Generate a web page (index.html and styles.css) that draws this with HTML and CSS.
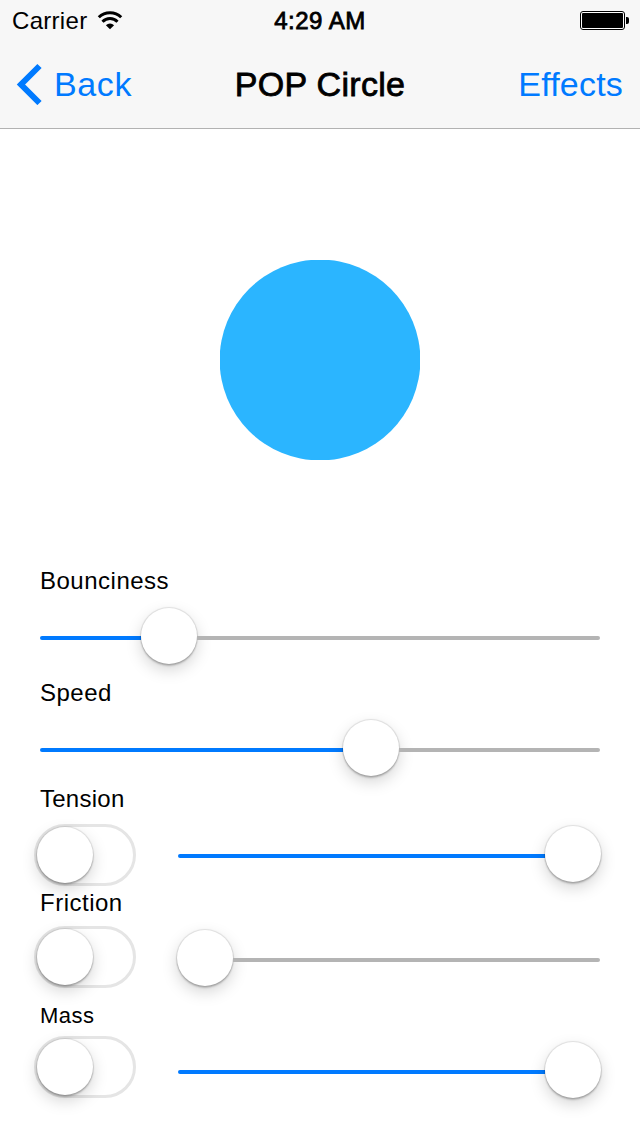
FILE: index.html
```html
<!DOCTYPE html>
<html lang="en">
<head>
<meta charset="utf-8">
<title>POP Circle</title>
<link rel="stylesheet" href="styles.css">
</head>
<body>
<header class="header">
  <div class="status">
    <div class="carrier"><span>Carrier</span>
      <svg class="wifi" width="26" height="20" viewBox="0 0 26 20">
        <g fill="none" stroke="#000" stroke-width="3">
          <path d="M1.8 7.2A16 16 0 0 1 24.2 7.2"/>
          <path d="M5.500 11.7A10.500 10.500 0 0 1 20.500 11.7"/>
        </g>
        <path d="M8.900 15.200A5.900 5.900 0 0 1 17.100 15.200L13 19.300Z"/>
      </svg>
    </div>
    <span class="clock medium">4:29 AM</span>
    <svg class="battery" width="50" height="20" viewBox="0 0 50 20">
      <rect x=".5" y=".5" width="44" height="18" rx="2.5" fill="#fff" stroke="#000"/>
      <rect x="2" y="2" width="41" height="15" rx="1"/>
      <path d="M46 6h1q2 0 2 2v3q0 2-2 2h-1z"/>
    </svg>
  </div>
  <nav class="nav">
    <a class="back">
      <svg class="chevron" width="26" height="42" viewBox="0 0 26 42"><path d="M23.500 3L5 21.500L23.500 40" fill="none" stroke="#007aff" stroke-width="6"/></svg>
      <span>Back</span>
    </a>
    <h1 class="title medium">POP Circle</h1>
    <a class="effects">Effects</a>
  </nav>
</header>
<main>
  <section class="stage">
    <svg class="circle" width="200" height="200" viewBox="0 0 200 200"><circle cx="100" cy="100" r="100.4" fill="#2bb5ff"/></svg>
  </section>
  <section class="fields">
    <div class="field bounciness">
      <label class="label">Bounciness</label>
      <div class="row"><div class="slider"><i class="fill" style="width:101px"></i><i class="knob"></i><i class="rest"></i></div></div>
    </div>
    <div class="field speed">
      <label class="label">Speed</label>
      <div class="row"><div class="slider"><i class="fill" style="width:303px"></i><i class="knob"></i><i class="rest"></i></div></div>
    </div>
    <div class="field tension">
      <label class="label">Tension</label>
      <div class="row"><div class="switch"><i class="knob"></i></div><div class="slider"><i class="fill" style="width:367px"></i><i class="knob"></i></div></div>
    </div>
    <div class="field friction">
      <label class="label">Friction</label>
      <div class="row"><div class="switch"><i class="knob"></i></div><div class="slider at-start"><i class="knob"></i><i class="rest"></i></div></div>
    </div>
    <div class="field mass">
      <label class="label">Mass</label>
      <div class="row"><div class="switch"><i class="knob"></i></div><div class="slider"><i class="fill" style="width:367px"></i><i class="knob"></i></div></div>
    </div>
  </section>
</main>
</body>
</html>
```
FILE: styles.css
```css
* { box-sizing: border-box; }
body {
  margin: 0;
  width: 640px;
  height: 1136px;
  overflow: hidden;
  background: #fff;
  color: #000;
  font-family: "Liberation Sans", Arial, sans-serif;
  font-size: 24px;
}
svg { display: block; flex: none; }
.header {
  height: 129px;
  background: #f7f7f7;
  border-bottom: 1px solid #b2b2b2;
}
.status {
  height: 40px;
  display: grid;
  grid-template-columns: 1fr auto 1fr;
  align-items: start;
  padding: 7px 12px 0 12px;
  line-height: 28px;
}
.carrier { display: flex; gap: 10px; letter-spacing: .3px; }
.wifi { margin-top: 3px; }
.clock { letter-spacing: .5px; }
.medium { -webkit-text-stroke: .8px #000; }
.battery { justify-self: end; margin: 4px -2px 0 0; }
.nav {
  height: 88px;
  display: grid;
  grid-template-columns: 1fr auto 1fr;
  align-items: center;
  padding: 0 16px;
  font-size: 34px;
  line-height: 40px;
}
.back, .effects { color: #007aff; }
.back { display: flex; align-items: center; gap: 12px; letter-spacing: .6px; }
.title {
  margin: 0;
  font-size: 34px;
  font-weight: 400;
  letter-spacing: .3px;
}
.effects { justify-self: end; margin-right: 1px; letter-spacing: .2px; }
.stage {
  height: 438px;
  padding-top: 131px;
  display: flex;
  justify-content: center;
}
.fields { padding: 0 40px; }
.label { display: block; height: 28px; line-height: 28px; letter-spacing: .5px; }
.row { display: flex; align-items: flex-start; }
.slider { flex: 1; height: 56px; display: flex; align-items: center; }
.fill, .rest { height: 4px; margin-top: 4px; }
.fill { background: #007aff; border-radius: 2px 0 0 2px; flex: none; }
.rest { background: #b4b4b4; border-radius: 0 2px 2px 0; flex: 1; }
.knob {
  flex: none;
  display: block;
  width: 56px;
  height: 56px;
  border-radius: 50%;
  background: #fff;
  box-shadow: 0 0 1px 1px rgba(0,0,0,.1), 0 2px 2px rgba(0,0,0,.2), 0 6px 16px rgba(0,0,0,.17);
}
.switch {
  flex: none;
  width: 102px;
  height: 62px;
  margin: 0 42px 0 -6px;
  border: 3px solid #e5e5e5;
  border-radius: 31px;
}
.bounciness .row { padding-top: 13px; }
.speed { padding-top: 15px; }
.speed .row { padding-top: 13px; }
.tension { padding-top: 9px; }
.tension .label { letter-spacing: .25px; }
.tension .row { padding-top: 11px; }
.tension .slider { margin-top: 2px; }
.friction { padding-top: 3px; }
.friction .row { padding-top: 9px; }
.friction .slider { margin-top: 4px; }
.at-start .knob { margin-left: -1px; }
.mass { padding-top: 14px; }
.mass .label { font-size: 22px; }
.mass .row { padding-top: 6px; }
.mass .slider { margin-top: 6px; }
```
